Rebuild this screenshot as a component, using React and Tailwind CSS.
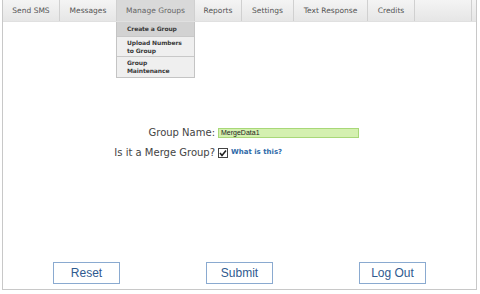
const tabs = [
  { label: 'Send SMS', w: 'w-[57px]' },
  { label: 'Messages', w: 'w-[57px]' },
  { label: 'Manage Groups', w: 'w-[78px]', active: true },
  { label: 'Reports', w: 'w-[47px]' },
  { label: 'Settings', w: 'w-[52px]' },
  { label: 'Text Response', w: 'w-[74px]' },
  { label: 'Credits', w: 'w-[47px]' },
  { label: '', w: 'w-[57px]' },
];

function Btn({ children }) {
  return (
    <button className="w-[67px] h-[22px] border border-[#8aaad0] bg-white text-[12px] text-[#2f5a8f] font-['Liberation_Sans',sans-serif]">
      {children}
    </button>
  );
}

export default function App() {
  return (
    <div className="w-[480px] h-[294px] bg-white font-['DejaVu_Sans',sans-serif] overflow-hidden">
      <div className="ml-[2px] w-[475px] h-[290px] border-l border-r border-b border-[#c8c8c8] flex flex-col relative">
        <div className="flex h-[22px] bg-gradient-to-b from-[#f4f4f4] to-[#e6e6e6] border-b border-[#e0e0e0]">
          {tabs.map((t, i) => (
            <div
              key={i}
              className={`${t.w} h-full flex items-center justify-center text-[7.5px] border-r border-[#d0d0d0] ${
                t.active ? 'bg-[#d9d9d9] text-[#666]' : 'text-[#555]'
              }`}
            >
              {t.label}
            </div>
          ))}
        </div>

        <div className="absolute left-[113px] top-[22px] w-[79px] border border-[#c4c4c4] border-t-0 bg-[#efefef] text-[6px] font-bold text-[#3a3a3a] leading-[8px] whitespace-nowrap tracking-[-0.1px]">
          <div className="h-[14px] bg-[#d2d2d2] px-[10px] flex items-center">Create a Group</div>
          <div className="h-[20px] px-[10px] flex flex-col justify-center border-t border-[#c8c8c8]">
            <span>Upload Numbers</span>
            <span>to Group</span>
          </div>
          <div className="h-[21px] px-[10px] flex flex-col justify-center border-t border-[#c8c8c8]">
            <span>Group</span>
            <span>Maintenance</span>
          </div>
        </div>

        <div className="flex flex-col items-start pl-[108px] pt-[103px] gap-[5px] text-[10px] text-[#444] whitespace-nowrap">
          <div className="flex items-center">
            <span className="w-[104px] text-right">Group Name:</span>
            <div className="ml-[3px] w-[141px] h-[10px] bg-[#d4f0b0] border border-[#a8d878] text-[7px] leading-[8px] pl-[2px] text-[#222] font-['Liberation_Sans',sans-serif]">
              MergeData1
            </div>
          </div>
          <div className="flex items-center">
            <span className="w-[104px] text-right">Is it a Merge Group?</span>
            <div className="ml-[3px] w-[10px] h-[10px] border border-[#444] bg-white flex items-center justify-center">
              <svg width="8" height="8" viewBox="0 0 8 8">
                <path d="M1 4 L3 6.5 L7 1.5" stroke="#222" strokeWidth="1.6" fill="none" />
              </svg>
            </div>
            <span className="ml-[3px] text-[7px] font-bold text-[#2f6aa8]">What is this?</span>
          </div>
        </div>

        <div className="mt-auto mb-[5px] flex justify-between px-[50px]">
          <Btn>Reset</Btn>
          <Btn>Submit</Btn>
          <Btn>Log Out</Btn>
        </div>
      </div>
    </div>
  );
}
